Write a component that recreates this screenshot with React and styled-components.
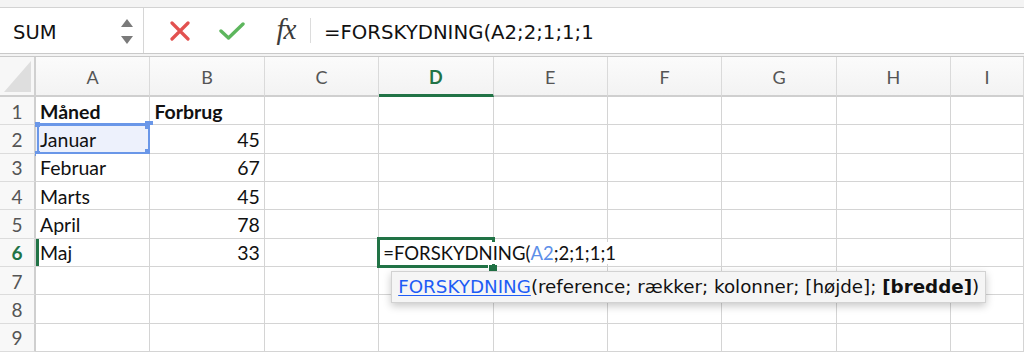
import React from 'react';
import styled, { createGlobalStyle } from 'styled-components';

const GlobalStyle = createGlobalStyle`
  html, body {
    margin: 0;
    padding: 0;
    background: #fff;
    overflow: hidden;
  }
  body {
    font-family: 'Lato', 'Open Sans', sans-serif;
  }
`;

const COLS = ['A', 'B', 'C', 'D', 'E', 'F', 'G', 'H', 'I'];

const data = [
  ['Måned', 'Forbrug'],
  ['Januar', '45'],
  ['Februar', '67'],
  ['Marts', '45'],
  ['April', '78'],
  ['Maj', '33'],
  [],
  [],
  [],
];

const Page = styled.div`
  width: 1024px;
  height: 352px;
  overflow: hidden;
  display: flex;
  flex-direction: column;
`;

const TitleStrip = styled.div`
  height: 7px;
  background: #f4f4f4;
  border-bottom: 1px solid #d3d3d3;
`;

const FormulaBar = styled.div`
  height: 45px;
  display: flex;
  align-items: stretch;
  background: #fff;
  border-bottom: 1px solid #c9c9c9;
`;

const NameBox = styled.div`
  width: 144px;
  display: flex;
  align-items: center;
  justify-content: space-between;
  padding: 3px 10px 0 13px;
  box-sizing: border-box;
  border-right: 1px solid #d6d6d6;
  font-family: 'DejaVu Sans', Verdana, sans-serif;
  font-size: 19.5px;
  color: #111;
`;

const Stepper = styled.div`
  display: flex;
  flex-direction: column;
  gap: 9px;
  margin-top: -2px;
`;

const Arrow = styled.div`
  width: 0;
  height: 0;
  border-left: 6px solid transparent;
  border-right: 6px solid transparent;
  ${({ dir }) =>
    dir === 'up' ? 'border-bottom: 8px solid #7a7a7a;' : 'border-top: 8px solid #7a7a7a;'}
`;

const Actions = styled.div`
  display: flex;
  align-items: center;
  padding-left: 24px;
`;

const IconButton = styled.div`
  width: ${({ w }) => w}px;
  display: flex;
  align-items: center;
  justify-content: center;
`;

const Fx = styled.span`
  font-family: 'Liberation Serif', 'Times New Roman', serif;
  font-style: italic;
  font-size: 29px;
  color: #3c3c3c;
  letter-spacing: -1px;
  margin-top: -2px;
`;

const Divider = styled.div`
  width: 1px;
  height: 25px;
  background: #dcdcdc;
  margin: 0 13px 0 10px;
`;

const FormulaText = styled.div`
  display: flex;
  align-items: center;
  padding-top: 3px;
  font-family: 'DejaVu Sans', Verdana, sans-serif;
  font-size: 19.7px;
  color: #111;
`;

const Gap = styled.div`
  height: 2px;
  background: #f3f3f3;
  border-bottom: 1px solid #c9c9c9;
`;

const Sheet = styled.div`
  display: grid;
  grid-template-columns: 36px repeat(8, 114.4px) 1fr;
  grid-template-rows: 40px repeat(9, 28.33px);
`;

const Corner = styled.div`
  position: relative;
  background: #f7f7f7;
  border-right: 2px solid #d0d0d0;
  border-bottom: 2px solid #cfcfcf;
  overflow: hidden;
  &::after {
    content: '';
    position: absolute;
    right: 3px;
    bottom: 3px;
    width: 0;
    height: 0;
    border-left: 27px solid transparent;
    border-bottom: 31px solid #dedede;
  }
`;

const ColHeader = styled.div`
  display: flex;
  align-items: center;
  justify-content: center;
  background: linear-gradient(#fbfbfb, #f3f3f3);
  border-right: 1px solid #dadada;
  border-bottom: 2px solid #cfcfcf;
  font-size: 18px;
  padding-top: 2px;
  color: ${({ active }) => (active ? '#217346' : '#555')};
  font-weight: ${({ active }) => (active ? 700 : 400)};
  ${({ active }) => active && 'border-bottom: 3px solid #217346;'}
`;

const RowHeader = styled.div`
  display: flex;
  align-items: center;
  justify-content: center;
  background: #f8f8f8;
  border-right: 2px solid #cfcfcf;
  border-bottom: 1px solid #dcdcdc;
  font-size: 19px;
  padding-top: 1px;
  color: ${({ active }) => (active ? '#217346' : '#555')};
  font-weight: ${({ active }) => (active ? 700 : 400)};
`;

const Cell = styled.div`
  position: relative;
  display: flex;
  align-items: center;
  justify-content: ${({ num }) => (num ? 'flex-end' : 'flex-start')};
  padding: 1px 4px 0 4px;
  border-right: 1px solid #d4d4d4;
  border-bottom: 1px solid #d4d4d4;
  font-size: 19.5px;
  color: #111;
  white-space: nowrap;
  font-weight: ${({ bold }) => (bold ? 700 : 400)};
  background: ${({ selected }) => (selected ? '#edf1fc' : '#fff')};
  ${({ rowMark }) => rowMark && 'box-shadow: inset 3px 0 0 #217346;'}
  z-index: ${({ top }) => (top ? 2 : 'auto')};
`;

const Selection = styled.div`
  position: absolute;
  left: 1px;
  right: -2px;
  top: -2px;
  bottom: -2px;
  border-top: 3px solid #6a97e8;
  border-bottom: 3px solid #6a97e8;
  border-right: 3px solid #6a97e8;
  border-left: 2px solid #6a97e8;
  pointer-events: none;
`;

const Handle = styled.div`
  position: absolute;
  width: ${({ size }) => size}px;
  height: ${({ size }) => size}px;
  background: #6a97e8;
  ${({ pos, size }) => {
    const o = `-${Math.round(size / 2) + 1}px`;
    return {
      tl: `left: ${o}; top: ${o};`,
      tr: `right: ${o}; top: ${o};`,
      bl: `left: ${o}; bottom: ${o};`,
      br: `right: ${o}; bottom: ${o};`,
    }[pos];
  }}
`;

const ActiveBorder = styled.div`
  position: absolute;
  left: -2px;
  right: -2px;
  top: -2px;
  bottom: -2px;
  border: 3px solid #217346;
  pointer-events: none;
  &::after {
    content: '';
    position: absolute;
    right: -5px;
    bottom: -6px;
    width: 8px;
    height: 6px;
    background: #217346;
    border-left: 1px solid #fff;
  }
`;

const CellText = styled.span`
  position: relative;
  z-index: 1;
  background: #fff;
  font-size: 18.5px;
`;

const Ref = styled.span`
  color: #5d8fe8;
`;

const Tooltip = styled.div`
  position: absolute;
  left: 12px;
  top: 32px;
  height: 30px;
  display: flex;
  align-items: center;
  padding: 0 6px;
  background: #f5f5f5;
  border: 1px solid #d2d2d2;
  box-shadow: 0 3px 8px rgba(0, 0, 0, 0.22);
  font-family: 'DejaVu Sans', Verdana, sans-serif;
  font-size: 18.3px;
  color: #111;
  white-space: nowrap;
  z-index: 3;
`;

const FnLink = styled.span`
  color: #1e5cf5;
  text-decoration: underline;
  text-underline-offset: 2px;
`;

const Bold = styled.b`
  font-weight: 700;
`;

const CrossIcon = () => (
  <svg width="22" height="20" viewBox="0 0 22 20">
    <path d="M3 2 L19 18 M19 2 L3 18" stroke="#e2514f" strokeWidth="3.2" strokeLinecap="round" />
  </svg>
);

const CheckIcon = () => (
  <svg width="26" height="20" viewBox="0 0 26 20">
    <path d="M2 10 L9.5 17 L24 3" stroke="#5db65d" strokeWidth="3.4" fill="none" strokeLinecap="round" strokeLinejoin="round" />
  </svg>
);

const App = () => {
  return (
    <Page>
      <GlobalStyle />
      <TitleStrip />
      <FormulaBar>
        <NameBox>
          <span>SUM</span>
          <Stepper>
            <Arrow dir="up" />
            <Arrow dir="down" />
          </Stepper>
        </NameBox>
        <Actions>
          <IconButton w={24}>
            <CrossIcon />
          </IconButton>
          <IconButton w={80}>
            <CheckIcon />
          </IconButton>
          <IconButton w={28}>
            <Fx>fx</Fx>
          </IconButton>
          <Divider />
        </Actions>
        <FormulaText>=FORSKYDNING(A2;2;1;1;1</FormulaText>
      </FormulaBar>
      <Gap />
      <Sheet>
        <Corner />
        {COLS.map((c) => (
          <ColHeader key={c} active={c === 'D'}>
            {c}
          </ColHeader>
        ))}
        {data.map((row, r) => (
          <React.Fragment key={r}>
            <RowHeader active={r === 5}>{r + 1}</RowHeader>
            {COLS.map((c, ci) => {
              const val = row[ci];
              const isNum = val !== undefined && /^\d+$/.test(val);
              if (r === 1 && ci === 0) {
                return (
                  <Cell key={c} selected>
                    {val}
                    <Selection>
                      <Handle pos="tl" size={5} />
                      <Handle pos="bl" size={5} />
                      <Handle pos="tr" size={8} />
                      <Handle pos="br" size={8} />
                    </Selection>
                  </Cell>
                );
              }
              if (r === 5 && ci === 3) {
                return (
                  <Cell key={c} top>
                    <ActiveBorder />
                    <CellText>
                      =FORSKYDNING(<Ref>A2</Ref>;2;1;1;1
                    </CellText>
                    <Tooltip>
                      <FnLink>FORSKYDNING</FnLink>
                      (reference; rækker; kolonner; [højde];&nbsp;<Bold>[bredde]</Bold>)
                    </Tooltip>
                  </Cell>
                );
              }
              return (
                <Cell key={c} num={isNum} bold={r === 0} rowMark={r === 5 && ci === 0}>
                  {val}
                </Cell>
              );
            })}
          </React.Fragment>
        ))}
      </Sheet>
    </Page>
  );
};

export default App;
